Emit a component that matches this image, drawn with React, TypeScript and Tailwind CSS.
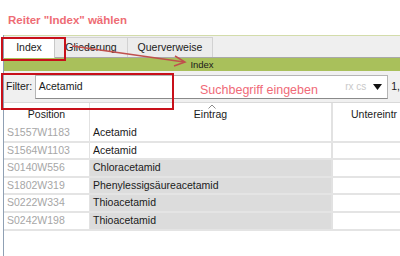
const rows = [
  { pos: "S1557W1183", name: "Acetamid", hit: false },
  { pos: "S1564W1103", name: "Acetamid", hit: false },
  { pos: "S0140W556", name: "Chloracetamid", hit: true },
  { pos: "S1802W319", name: "Phenylessigsäureacetamid", hit: true },
  { pos: "S0222W334", name: "Thioacetamid", hit: true },
  { pos: "S0242W198", name: "Thioacetamid", hit: true },
];

export default function App() {
  return (
    <div className="relative w-[400px] h-[256px] overflow-hidden bg-white font-['Liberation_Sans',Arial,sans-serif] text-[10.5px] text-[#1a1a1a]">
      {/* annotation title */}
      <div className="h-[35px] pl-[8px] pt-[15px] text-[11.5px] font-bold text-[#ee6c74] leading-none">
        Reiter "Index" wählen
      </div>

      <div className="ml-[3px] border-l border-[#8fa0b4] h-[221px] flex flex-col">
        {/* tab bar */}
        <div className="h-[23px] flex items-end bg-[#efefef] border-t border-[#d3dcaa] border-b border-b-[#a9a9a9]">
          <div className="h-[21px] w-[51px] flex items-center justify-center bg-white border-r border-[#c8c8c8] -mb-px">
            Index
          </div>
          <div className="h-[20px] w-[73px] flex items-center justify-center bg-[#ececec] border-r border-t border-[#d2d2d2]">
            Gliederung
          </div>
          <div className="h-[20px] w-[85px] flex items-center justify-center bg-[#ececec] border-r border-t border-[#d2d2d2]">
            Querverweise
          </div>
        </div>

        {/* green header */}
        <div className="h-[13px] bg-[#a9c05b] flex items-center justify-center text-[9.5px] leading-none">
          Index
        </div>

        {/* filter row */}
        <div className="h-[32px] bg-[#f0f0f0] flex items-center pl-[2px] border-b border-[#d9d9d9]">
          <span className="w-[29px]">Filter:</span>
          <div className="h-[24px] w-[356px] bg-white border border-[#b5b5b5] border-b-[#8a8a8a] flex items-center pl-[3px]">
            <span className="flex-1">Acetamid</span>
            <span className="text-[#c9c9c9] text-[10px] mr-[7px]">rx cs</span>
            <svg width="9" height="6" viewBox="0 0 9 6" className="mr-[5px]">
              <polygon points="0,0 9,0 4.5,6" fill="#111" />
            </svg>
          </div>
          <span className="ml-[3px]">1,</span>
        </div>

        {/* table header */}
        <div className="h-[22px] flex bg-white">
          <div className="w-[86px] flex items-center justify-center pt-[2px] border-r border-[#e2e2e2]">
            Position
          </div>
          <div className="relative w-[243px] flex items-center justify-center pt-[2px] border-r-2 border-[#e2e2e2]">
            <svg width="8" height="5" viewBox="0 0 8 5" className="absolute top-[1px] left-[118px]">
              <polyline points="0.5,4.5 4,1 7.5,4.5" fill="none" stroke="#8c8c8c" strokeWidth="1" />
            </svg>
            Eintrag
          </div>
          <div className="flex-1 flex items-center pl-[18px] pt-[2px] whitespace-nowrap overflow-hidden">
            Untereintr
          </div>
        </div>

        {/* rows */}
        {rows.map((r) => (
          <div key={r.pos} className="h-[17.6px] flex border-b-2 border-[#e4e4e4]">
            <div className="w-[86px] flex items-center pl-[3px] text-[#a6a6a6] border-r border-[#e2e2e2]">
              {r.pos}
            </div>
            <div
              className={
                "w-[243px] flex items-center pl-[3px] border-r-2 border-[#e2e2e2] " +
                (r.hit ? "bg-[#dcdcdc]" : "bg-white")
              }
            >
              {r.name}
            </div>
            <div className="flex-1 bg-white" />
          </div>
        ))}
      </div>

      {/* annotation overlays */}
      <div className="absolute left-[1px] top-[37px] w-[65px] h-[24px] border-2 border-[#c8101a]" />
      <div className="absolute left-[1px] top-[73px] w-[173px] h-[37px] border-2 border-[#c8101a]" />
      <div className="absolute left-[200px] top-[84px] text-[12.5px] text-[#f06a78] leading-none whitespace-nowrap">
        Suchbegriff eingeben
      </div>
      <svg className="absolute left-0 top-0" width="400" height="256">
        <line x1="72" y1="46" x2="184" y2="62" stroke="#c0504d" strokeWidth="1.5" />
        <polyline points="175,56 185,62 174,66" fill="none" stroke="#c0504d" strokeWidth="1.5" />
      </svg>
    </div>
  );
}
